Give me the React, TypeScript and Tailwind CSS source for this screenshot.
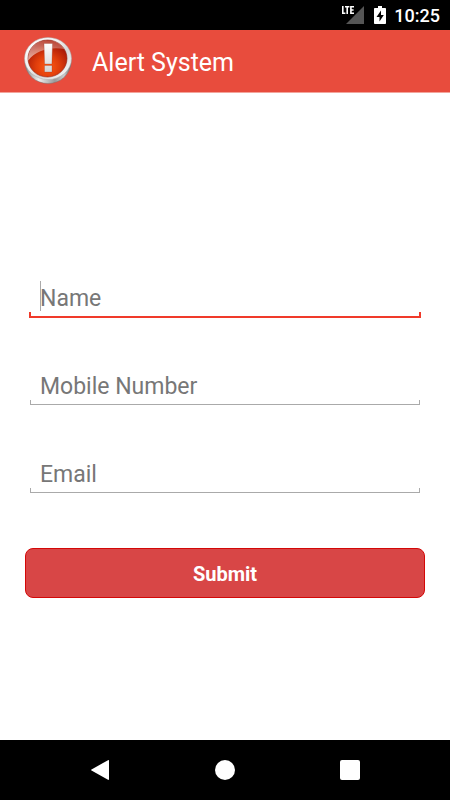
import { useState } from "react";
import clsx from "clsx";

const FIELDS = [
  { id: "name", label: "Name", type: "text" },
  { id: "mobile", label: "Mobile Number", type: "tel" },
  { id: "email", label: "Email", type: "email" },
];

function StatusBar() {
  return (
    <div className="flex h-[30px] shrink-0 items-center justify-end bg-black pr-[10px] text-white">
      <svg viewBox="0 0 24 20" className="mr-[9px] h-5 w-6" aria-hidden="true">
        <path d="M23 1v18H5z" fill="#555" />
        <path
          d="M1.800 1v7.300h2.600M4 1.800h4.400M6.200 1.800V9M13 1.800H9.900v6.500H13M9.900 5h2.700"
          fill="none"
          stroke="#fff"
          strokeWidth="1.600"
        />
      </svg>
      <svg viewBox="0 0 12 18" className="mr-2 h-[18px] w-3" aria-hidden="true">
        <path d="M4 0h4v2h3.200c.5 0 .8.3.8.8v14.400c0 .5-.3.8-.8.8H.8c-.5 0-.8-.3-.8-.8V2.800C0 2.300.3 2 .8 2H4z" fill="#fff" />
        <path d="M7 4.500 2.500 11h3v4.500L9.800 9H7z" fill="#000" />
      </svg>
      <span className="pt-0.5 text-lg leading-none font-medium">10:25</span>
    </div>
  );
}

function AlertLogo() {
  return (
    <svg viewBox="0 0 48 48" className="h-12 w-12" aria-hidden="true">
      <defs>
        <linearGradient id="rim" x1="0" y1="0" x2="1" y2="1">
          <stop offset="0" stopColor="#fff" />
          <stop offset="0.4" stopColor="#f2f2f2" />
          <stop offset="0.6" stopColor="#d8d8d8" />
          <stop offset="1" stopColor="#fff" />
        </linearGradient>
        <linearGradient id="base" x1="0" y1="0" x2="1" y2="0">
          <stop offset="0" stopColor="#888" />
          <stop offset="0.3" stopColor="#eee" />
          <stop offset="0.65" stopColor="#999" />
          <stop offset="0.85" stopColor="#ccc" />
          <stop offset="1" stopColor="#666" />
        </linearGradient>
        <radialGradient id="face" cx="0.5" cy="0.72" r="0.6">
          <stop offset="0" stopColor="#ff5a14" />
          <stop offset="0.5" stopColor="#e03e0c" />
          <stop offset="1" stopColor="#ac1c08" />
        </radialGradient>
        <linearGradient id="gloss" x1="0.6" y1="0" x2="0.2" y2="1">
          <stop offset="0" stopColor="#fff" stopOpacity="0.2" />
          <stop offset="1" stopColor="#fff" stopOpacity="0.6" />
        </linearGradient>
        <linearGradient id="mark" x1="0" y1="0" x2="0" y2="1">
          <stop offset="0" stopColor="#fff" />
          <stop offset="1" stopColor="#d4d4d4" />
        </linearGradient>
      </defs>
      <ellipse cx="24" cy="24.800" rx="23" ry="21.700" fill="url(#base)" stroke="#777" strokeWidth="0.5" />
      <ellipse cx="24" cy="21.500" rx="23.500" ry="21" fill="url(#rim)" stroke="#aaa" strokeWidth="0.5" />
      <ellipse cx="23.500" cy="21.500" rx="19.500" ry="18.500" fill="url(#face)" stroke="#8e1e10" strokeWidth="0.6" />
      <path d="M4.300 23.500C3.500 12 12 3.200 23.500 3.200c8 0 13.500 3.400 16.800 8.800C27 9.500 12 13 4.300 23.500z" fill="url(#gloss)" />
      <path d="M20 6.500h8.500l-.6 20.500h-7.300zM20.500 28.500h7.500V35h-7.500z" fill="url(#mark)" stroke="#8a2a18" strokeOpacity="0.5" strokeWidth="0.5" />
    </svg>
  );
}

function NavBar() {
  return (
    <nav className="flex h-[60px] shrink-0 items-center justify-center bg-black">
      <button type="button" aria-label="Back" className="flex w-[125px] justify-center">
        <svg viewBox="0 0 20 20" className="h-5 w-5" fill="#fff">
          <path d="M18 .2c.7-.4 1 0 1 .6v18.400c0 .6-.3 1-1 .6L1.500 10.600c-.6-.4-.6-.8 0-1.200z" />
        </svg>
      </button>
      <button type="button" aria-label="Home" className="flex w-[125px] justify-center">
        <span className="h-5 w-5 rounded-full bg-white" />
      </button>
      <button type="button" aria-label="Recent apps" className="flex w-[125px] justify-center">
        <span className="h-5 w-5 rounded-xs bg-white" />
      </button>
    </nav>
  );
}

export default function App() {
  const [active, setActive] = useState("name");
  const [values, setValues] = useState<Record<string, string>>({});

  return (
    <div className="flex min-h-screen flex-col bg-white font-[Roboto,sans-serif]">
      <StatusBar />
      <header className="flex h-[63px] shrink-0 items-center gap-5 border-b border-[#f3a49b] bg-[#e84c3d] px-6">
        <AlertLogo />
        <h1 className="pt-1 text-[25px] leading-8 text-white">Alert System</h1>
      </header>

      <main className="flex flex-1 flex-col justify-center px-[25px] pt-[46px]">
        <form onSubmit={(e) => e.preventDefault()}>
          <div className="flex flex-col gap-[52px] px-[5px]">
            {FIELDS.map((field) => (
              <div key={field.id} className="relative">
                <input
                  id={field.id}
                  type={field.type}
                  aria-label={field.label}
                  placeholder={field.label}
                  value={values[field.id] ?? ""}
                  onFocus={() => setActive(field.id)}
                  onChange={(e) => setValues({ ...values, [field.id]: e.target.value })}
                  className="block h-9 w-full px-[10px] pb-0.5 text-[23px] text-[#444] outline-none placeholder:text-[#777]"
                />
                {active === field.id && !values[field.id] && (
                  <span className="pointer-events-none absolute top-0 left-[10px] h-[30px] w-px bg-[#aaa]" />
                )}
                <span
                  className={clsx(
                    "pointer-events-none absolute",
                    active === field.id
                      ? "-inset-x-px -bottom-px h-1.5 border-x-2 border-b-2 border-[#f03a2a]"
                      : "inset-x-0 bottom-0 h-[5px] border-x border-b border-[#aaa]"
                  )}
                />
              </div>
            ))}
          </div>
          <button
            type="submit"
            className="mt-[55px] block h-[50px] w-full rounded-lg border border-[#d40808] bg-[#d84646] pt-px text-xl font-bold text-white"
          >
            Submit
          </button>
        </form>
      </main>

      <NavBar />
    </div>
  );
}
